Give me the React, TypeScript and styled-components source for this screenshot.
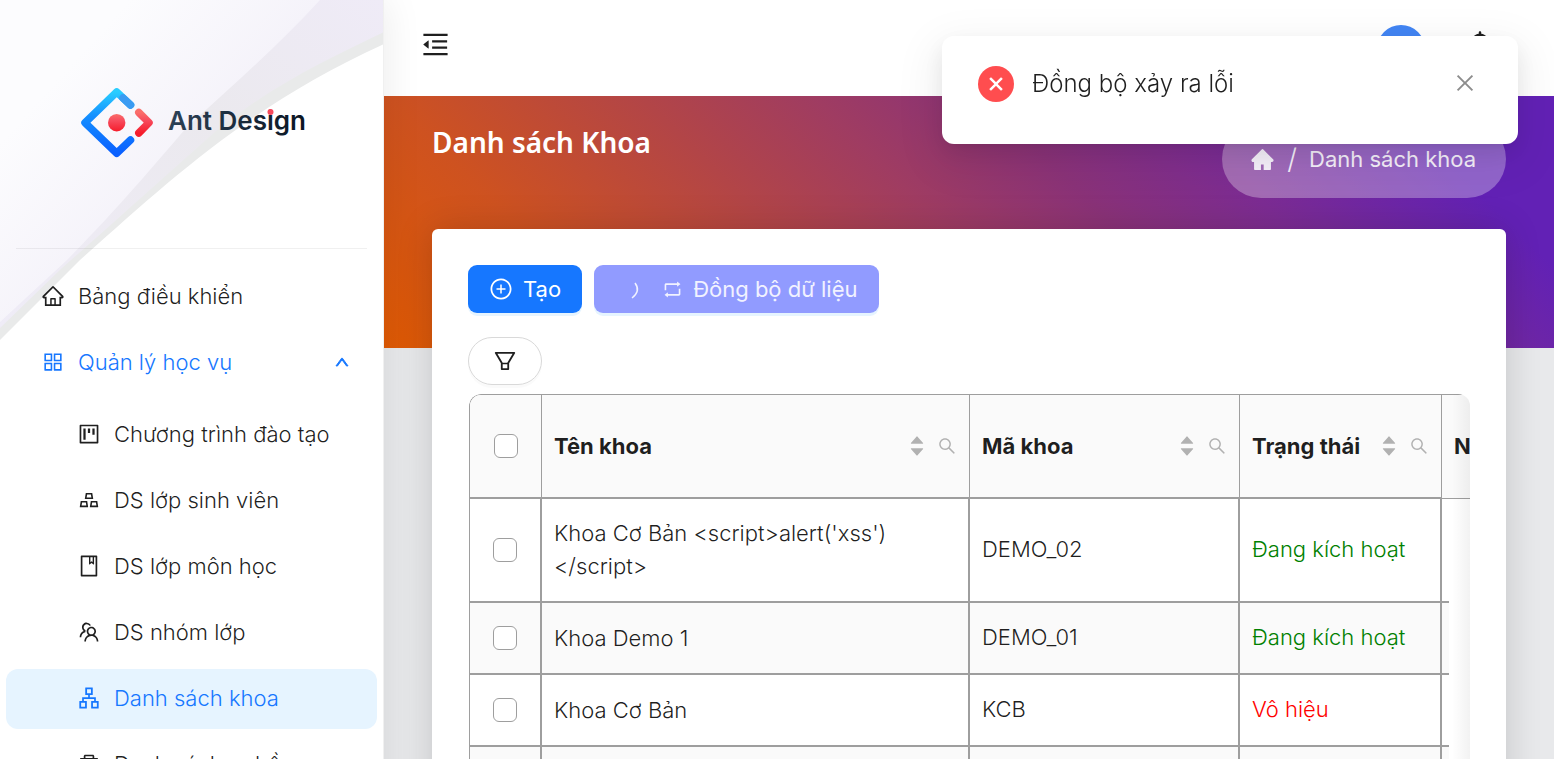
import React, { useState } from "react";
import styled, { createGlobalStyle, css } from "styled-components";
import {
  AiOutlineHome, AiOutlineAppstore, AiOutlineProject, AiOutlineGold, AiOutlineBook, AiOutlineTeam,
  AiOutlineApartment, AiOutlineDelete, AiOutlineUp, AiOutlineMenuFold, AiOutlineBell,
  AiOutlineClose, AiFillHome, AiOutlinePlusCircle, AiOutlineRetweet,
  AiOutlineFilter, AiOutlineSearch, AiFillCaretUp, AiFillCaretDown,
} from "react-icons/ai";

const ink = "rgba(0, 0, 0, 0.88)";
const line = "#9e9e9e";

const Global = createGlobalStyle`
  *, *::before, *::after { box-sizing: border-box; }
  body {
    margin: 0;
    background: #e8e9eb;
    color: ${ink};
    font-family: Inter, "Noto Sans", sans-serif;
    font-size: 22px;
    font-weight: 300;
    line-height: 33px;
  }
  button { font: inherit; color: inherit; cursor: pointer; }
`;

const Shell = styled.div`
  display: grid;
  grid-template-columns: 384px minmax(0, 1fr);
  height: 100vh;
  overflow: hidden;
`;

const Sider = styled.aside`
  position: relative;
  z-index: 1;
  isolation: isolate;
  background: #fff;
  border-right: 1px solid rgba(5, 5, 5, 0.06);
  box-shadow: 2px 0 36px rgba(0, 0, 0, 0.08);
  overflow: hidden;
`;
const Veil = styled.svg`
  position: absolute;
  z-index: -1;
  top: 0;
  left: 0;
  width: 384px;
  height: 340px;
`;
const Brand = styled.a`
  display: flex;
  align-items: center;
  justify-content: center;
  height: 248px;
  padding-bottom: 3px;
`;
const Rule = styled.hr`
  height: 1px;
  margin: 0 16px;
  border: 0;
  background: rgba(5, 5, 5, 0.06);
`;
const Menu = styled.ul`
  list-style: none;
  margin: 0;
  padding: 18px 6px 0;
  display: grid;
  gap: 6px;
`;
const SubMenu = styled(Menu)`
  padding: 12px 0 0;
`;
const itemBox = css`
  display: flex;
  align-items: center;
  gap: 13px;
  width: 100%;
  height: 60px;
  border: 0;
  border-radius: 12px;
  background: none;
  text-align: left;
  text-decoration: none;
  white-space: nowrap;
  svg { flex: none; width: 24px; height: 24px; }
`;
const MenuLink = styled.a<{ $nested?: boolean; $active?: boolean }>`
  ${itemBox}
  padding: 0 0 2px ${(p) => (p.$nested ? 71 : 35)}px;
  color: ${(p) => (p.$active ? "#1677ff" : ink)};
  background: ${(p) => (p.$active ? "#e6f4ff" : "none")};
`;
const MenuToggle = styled.button`
  ${itemBox}
  padding: 0 27px 2px 35px;
  color: #1677ff;
  svg:last-child { width: 16px; height: 16px; margin-left: auto; stroke: currentColor; stroke-width: 60px; }
`;

const Main = styled.main`
  display: grid;
  grid-template-rows: 96px auto;
  align-content: start;
  min-width: 0;
`;
const Header = styled.header`
  display: flex;
  align-items: center;
  gap: 39px;
  padding: 0 58px 7px 36px;
  background: #fff;
`;
const IconButton = styled.button`
  display: grid;
  place-items: center;
  padding: 0;
  border: 0;
  background: none;
`;
const Avatar = styled.span`
  width: 48px;
  height: 48px;
  margin: 8px 0 0 auto;
  border-radius: 50%;
  background: #4285f4;
`;
const Page = styled.div`
  display: grid;
  grid-template-columns: minmax(0, 1fr);
  grid-template-rows: 133px auto;
  padding: 0 48px;
  background: linear-gradient(45deg, #df5a04 0%, #ce5220 18%, #9f3c62 48%, #8a3278 60%, #7c2c93 72%, #6221b5 88%) top / 100% 252px no-repeat;
`;
const Banner = styled.div`
  display: flex;
  justify-content: space-between;
  align-items: flex-start;
  padding-top: 24px;
  color: #fff;
`;
const Title = styled.h1`
  margin: 0;
  font: 600 28px/45px "Noto Sans", "Open Sans", sans-serif;
`;
const Crumbs = styled.nav`
  display: flex;
  align-items: center;
  gap: 12px;
  height: 78px;
  padding: 0 30px 0 28px;
  border-radius: 39px;
  background: rgba(255, 255, 255, 0.3);
  font-weight: 400;
  color: #f5f0fa;
  a { display: flex; color: inherit; }
`;
const Slash = styled.span`
  font-size: 28px;
  font-weight: 300;
`;
const Card = styled.section`
  min-height: 560px;
  padding: 36px;
  border-radius: 6px;
  background: #fff;
  box-shadow: 0 0 36px rgba(0, 0, 0, 0.16);
`;
const Toolbar = styled.div`
  display: flex;
  gap: 12px;
  margin-bottom: 24px;
`;
const Action = styled.button<{ $busy?: boolean }>`
  display: flex;
  align-items: center;
  gap: 10px;
  height: 48px;
  padding: 0 21px;
  border: 0;
  border-radius: 9px;
  color: #fff;
  font-weight: 400;
  white-space: nowrap;
  background: ${(p) => (p.$busy ? "#919bff" : "#1677ff")};
  box-shadow: 0 3px 0 rgba(5, 145, 255, 0.1);
  ${(p) => p.$busy && css`color: #f1f2ff; padding-left: 30px;`}
`;
const Spinner = styled.svg`
  width: 21px;
  height: 21px;
  margin-right: 7px;
`;
const FilterButton = styled(IconButton)`
  width: 74px;
  height: 48px;
  margin-bottom: 9px;
  border: 1px solid #d9d9d9;
  border-radius: 24px;
  box-shadow: 0 3px 0 rgba(0, 0, 0, 0.02);
`;
const TableFrame = styled.div`
  position: relative;
  margin-left: 1px;
  overflow: hidden;
  border-radius: 12px 12px 0 0;
  &::after {
    content: "";
    position: absolute;
    inset: 0 0 0 auto;
    width: 18px;
    background: linear-gradient(to left, rgba(5, 5, 5, 0.05), transparent);
    pointer-events: none;
  }
`;
const Grid = styled.table`
  table-layout: fixed;
  width: 100%;
  border-collapse: separate;
  border-spacing: 0;
  border-left: 1px solid ${line};
  border-top: 1px solid ${line};
  border-top-left-radius: 12px;
`;
const Head = styled.th`
  height: 104px;
  padding: 0 12px;
  text-align: left;
  font-weight: 700;
  white-space: nowrap;
  overflow: hidden;
  background: #fafafa;
  border-right: 1px solid ${line};
  border-bottom: 2px solid ${line};
  &:first-child { border-top-left-radius: 11px; }
  &:last-child { border-right: 0; border-bottom-width: 1px; }
`;
const HeadInner = styled.div`
  display: flex;
  align-items: center;
  justify-content: space-between;
`;
const Tools = styled.span`
  display: flex;
  align-items: center;
  gap: 11px;
  color: rgba(0, 0, 0, 0.29);
`;
const Sorter = styled(IconButton)`
  svg { display: block; width: 18px; height: 18px; }
  svg + svg { margin-top: -6px; }
`;
const Row = styled.tr`
  background: #fff;
  &:nth-child(even) { background: #fafafa; }
`;
const Cell = styled.td<{ $tone?: string }>`
  height: 72px;
  padding: 17px 12px 18px;
  color: ${(p) => p.$tone || ink};
  border-right: 2px solid ${line};
  border-bottom: 2px solid ${line};
`;
const NameCell = styled(Cell)`
  padding: 18px 12px;
`;
const Stub = styled.td`
  border-bottom: 2px solid ${line};
`;
const Fill = styled.td`
  background: #fff;
`;
const Check = styled.input`
  appearance: none;
  display: block;
  width: 24px;
  height: 24px;
  margin: 0 auto;
  border: 1px solid ${line};
  border-radius: 6px;
  background: #fff;
  &:checked { background: #1677ff; }
`;

const Notice = styled.div`
  position: fixed;
  z-index: 5;
  top: 36px;
  right: 36px;
  display: flex;
  align-items: flex-start;
  gap: 18px;
  width: 576px;
  min-height: 108px;
  padding: 30px 36px;
  border-radius: 12px;
  background: #fff;
  font-size: 24px;
  line-height: 36px;
  box-shadow: 0 9px 24px rgba(0, 0, 0, 0.08), 0 5px 9px -6px rgba(0, 0, 0, 0.12), 0 14px 42px 12px rgba(0, 0, 0, 0.05);
`;
const ErrorMark = styled.span`
  display: grid;
  place-items: center;
  width: 36px;
  height: 36px;
  border-radius: 50%;
  background: #ff4d4f;
`;
const Dismiss = styled(IconButton)`
  height: 33px;
  margin: 0 5px 0 auto;
  color: rgba(0, 0, 0, 0.45);
`;

const Logo = () => (
  <svg width="226" height="71" viewBox="0 0 226 71" overflow="visible" role="img" aria-label="Ant Design">
    <defs>
      <linearGradient id="lb" x1="0" y1="0" x2="0" y2="1"><stop offset="0" stopColor="#29cdff" /><stop offset=".4" stopColor="#148eff" /><stop offset="1" stopColor="#0a60ff" /></linearGradient>
      <linearGradient id="lr" x1="0" y1="0" x2="0" y2="1"><stop offset="0" stopColor="#fa6e6a" /><stop offset=".4" stopColor="#f74a5c" /><stop offset="1" stopColor="#f51d2c" /></linearGradient>
      <linearGradient id="lt" x1="0" y1="0" x2="1" y2="0"><stop offset="0" stopColor="#2c4257" /><stop offset="1" stopColor="#0a1622" /></linearGradient>
    </defs>
    <g fill="none" strokeWidth="7.5" strokeLinecap="round" strokeLinejoin="round">
      <path d="M51.500 18 L37.700 5 L6 35.700 L37.700 66.300 L51.500 53" stroke="url(#lb)" />
      <path d="M44 11 L51.500 18" stroke="#3a9bf2" />
      <path d="M59.800 25.500 L70 35.700 L59.800 46" stroke="url(#lr)" />
    </g>
    <circle cx="37.700" cy="35.700" r="8.700" fill="url(#lr)" />
    <text x="89" y="43" fontFamily="Inter, sans-serif" fontSize="26" fontWeight="600" fill="url(#lt)">Ant Design</text>
    <circle cx="191.500" cy="25" r="3" fill="#f74a5c" />
  </svg>
);

const entries = [
  { icon: AiOutlineProject, label: "Chương trình đào tạo" },
  { icon: AiOutlineGold, label: "DS lớp sinh viên" },
  { icon: AiOutlineBook, label: "DS lớp môn học" },
  { icon: AiOutlineTeam, label: "DS nhóm lớp" },
  { icon: AiOutlineApartment, label: "Danh sách khoa", active: true },
  { icon: AiOutlineDelete, label: "Danh sách nghề" },
];

const rows = [
  { name: "Khoa Cơ Bản <script>alert('xss')</script>", code: "DEMO_02", on: true },
  { name: "Khoa Demo 1", code: "DEMO_01", on: true },
  { name: "Khoa Cơ Bản", code: "KCB", on: false },
  { name: "", code: "", on: null },
];

const HeadCell = ({ label }: { label: string }) => (
  <Head scope="col">
    <HeadInner>
      {label}
      <Tools>
        <Sorter aria-label={"Sắp xếp " + label}><AiFillCaretUp /><AiFillCaretDown /></Sorter>
        <IconButton aria-label={"Tìm " + label}><AiOutlineSearch size={20} /></IconButton>
      </Tools>
    </HeadInner>
  </Head>
);

export default function App() {
  const [open, setOpen] = useState(true);
  const [notice, setNotice] = useState(true);
  return (
    <>
      <Global />
      <Shell>
        <Sider>
          <Veil viewBox="0 0 384 340" aria-hidden="true">
            <defs>
              <linearGradient id="v1" x1="0" y1="0" x2=".55" y2=".5"><stop offset=".4" stopColor="#fcfcfe" /><stop offset="1" stopColor="#f5f3fa" /></linearGradient>
              <linearGradient id="v2" x1="1" y1="0" x2="0" y2="1"><stop offset="0" stopColor="#efebf7" /><stop offset=".4" stopColor="#ebe9ee" /><stop offset="1" stopColor="#efecf7" /></linearGradient>
            </defs>
            <path d="M0 0H384V44C250 105 170 180 80 260L0 340Z" fill="#e9eaea" />
            <path d="M0 0H384V32C330 58 270 86 215 132C165 176 110 226 62 268L0 328Z" fill="url(#v2)" />
            <path d="M0 0H320C280 44 232 86 187 127C150 170 120 206 67 260L0 322Z" fill="url(#v1)" />
          </Veil>
          <Brand href="#"><Logo /></Brand>
          <Rule />
          <Menu>
            <li><MenuLink href="#"><AiOutlineHome />Bảng điều khiển</MenuLink></li>
            <li>
              <MenuToggle aria-expanded={open} onClick={() => setOpen(!open)}>
                <AiOutlineAppstore />Quản lý học vụ<AiOutlineUp />
              </MenuToggle>
              {open && (
                <SubMenu>
                  {entries.map(({ icon: Icon, label, active }) => (
                    <li key={label}>
                      <MenuLink href="#" $nested $active={active}><Icon />{label}</MenuLink>
                    </li>
                  ))}
                </SubMenu>
              )}
            </li>
          </Menu>
        </Sider>
        <Main>
          <Header>
            <IconButton aria-label="Thu gọn menu"><AiOutlineMenuFold size={31} /></IconButton>
            <Avatar />
            <IconButton aria-label="Thông báo"><AiOutlineBell size={32} /></IconButton>
          </Header>
          <Page>
            <Banner>
              <Title>Danh sách Khoa</Title>
              <Crumbs aria-label="Breadcrumb">
                <a href="#" aria-label="Trang chủ"><AiFillHome size={25} /></a>
                <Slash>/</Slash>
                <span>Danh sách khoa</span>
              </Crumbs>
            </Banner>
            <Card>
              <Toolbar>
                <Action><AiOutlinePlusCircle size={24} />Tạo</Action>
                <Action $busy>
                  <Spinner viewBox="0 0 21 21" fill="none" stroke="currentColor" strokeWidth="1.5"><path d="M11 4Q17 12 8 19" /></Spinner>
                  <AiOutlineRetweet size={21} />Đồng bộ dữ liệu
                </Action>
              </Toolbar>
              <FilterButton aria-label="Lọc"><AiOutlineFilter size={26} /></FilterButton>
              <TableFrame>
                <Grid>
                  <colgroup>
                    <col style={{ width: 72 }} /><col /><col style={{ width: 270 }} /><col style={{ width: 202 }} /><col style={{ width: 7 }} /><col style={{ width: 21 }} />
                  </colgroup>
                  <thead>
                    <tr>
                      <Head scope="col"><Check type="checkbox" aria-label="Chọn tất cả" /></Head>
                      <HeadCell label="Tên khoa" />
                      <HeadCell label="Mã khoa" />
                      <HeadCell label="Trạng thái" />
                      <Head scope="col" colSpan={2}>N</Head>
                    </tr>
                  </thead>
                  <tbody>
                    {rows.map((r) => (
                      <Row key={r.code}>
                        <Cell><Check type="checkbox" aria-label={"Chọn " + r.name} /></Cell>
                        <NameCell>{r.name}</NameCell>
                        <Cell>{r.code}</Cell>
                        <Cell $tone={r.on ? "green" : "red"}>{r.on === null ? "" : r.on ? "Đang kích hoạt" : "Vô hiệu"}</Cell>
                        <Stub />
                        <Fill />
                      </Row>
                    ))}
                  </tbody>
                </Grid>
              </TableFrame>
            </Card>
          </Page>
        </Main>
      </Shell>
      {notice && (
        <Notice role="alert">
          <ErrorMark><AiOutlineClose size={18} color="#fff" stroke="#fff" strokeWidth={60} /></ErrorMark>
          Đồng bộ xảy ra lỗi
          <Dismiss aria-label="Đóng" onClick={() => setNotice(false)}><AiOutlineClose size={24} /></Dismiss>
        </Notice>
      )}
    </>
  );
}
